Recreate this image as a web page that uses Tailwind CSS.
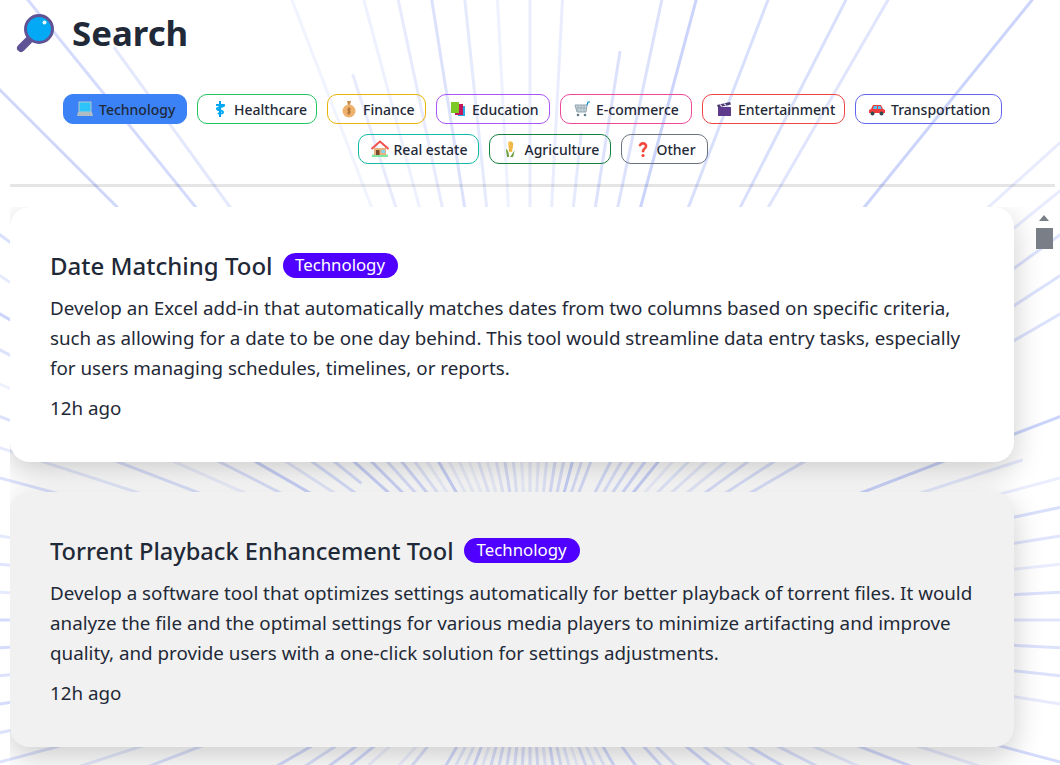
<!DOCTYPE html>
<html lang="en">
<head>
  <meta charset="UTF-8" />
  <title>Search</title>
  <script src="https://cdn.jsdelivr.net/npm/@tailwindcss/browser@4"></script>
</head>
<body class="relative h-[765px] w-[1060px] overflow-hidden bg-white font-['Noto_Sans',sans-serif] text-[#1f2937]">
  <!-- sunburst behind everything -->
  <svg id="rays" class="absolute inset-0" width="1060" height="765" viewBox="0 0 1060 765"></svg>

  <div class="relative flex h-full flex-col">
    <header class="flex h-[94px] items-start pl-[15px] pt-[13px]">
      <svg class="h-[40px] w-[40px]" viewBox="0 0 40 40">
        <path d="M13 28 L6 35" stroke="#5f5395" stroke-width="8" stroke-linecap="round" />
        <circle cx="24" cy="16" r="13.5" fill="#03a9f4" stroke="#5f5395" stroke-width="3" />
        <circle cx="29.5" cy="9.5" r="2" fill="#e8f8ff" />
      </svg>
      <h1 class="mt-[-1px] ml-[17px] text-[34.8px] leading-[42px] font-bold">Search</h1>
    </header>

    <nav class="ml-[10px] flex w-[1045px] flex-wrap justify-center gap-[10px] text-[14px] font-medium">
      <a class="flex h-[30px] w-[124px] items-center gap-[5px] rounded-[10px] border border-[#3b82f6] bg-[#3b82f6] pl-[12px] whitespace-nowrap">
        <svg class="h-[18px] w-[18px]" viewBox="0 0 18 18"><rect x="3" y="2" width="12" height="10" fill="#2cc4fa" stroke="#b8c4cc" /><path d="M2 12h14l1 4H1z" fill="#b0bcc4" /></svg>
        <span>Technology</span>
      </a>
      <a class="flex h-[30px] w-[120px] items-center gap-[5px] rounded-[10px] border border-[#22c55e] pl-[13px] whitespace-nowrap">
        <svg class="h-[18px] w-[18px]" viewBox="0 0 18 18"><path d="M9 1v16" stroke="#039be5" stroke-width="2" /><path d="M5 5h8c1 2-8 2-7 4s6 1 6 3-4 2-5 1" fill="none" stroke="#03a9f4" stroke-width="2" /></svg>
        <span>Healthcare</span>
      </a>
      <a class="flex h-[30px] w-[99px] items-center gap-[5px] rounded-[10px] border border-[#eab308] pl-[12px] whitespace-nowrap">
        <svg class="h-[18px] w-[18px]" viewBox="0 0 18 18"><path d="M7 1h4l-1 4h-2z" fill="#c98d4e" /><ellipse cx="9" cy="11" rx="6.5" ry="6.5" fill="#eeb26e" /><path d="M9 7v8M11 9H8v2h2v2H7" fill="none" stroke="#a86a2c" stroke-width="1" /></svg>
        <span>Finance</span>
      </a>
      <a class="flex h-[30px] w-[114px] items-center gap-[5px] rounded-[10px] border border-[#a855f7] pl-[12px] whitespace-nowrap">
        <svg class="h-[18px] w-[18px]" viewBox="0 0 18 18"><rect x="9" y="6" width="7" height="10" fill="#29a9e6" /><rect x="6" y="4" width="8" height="11" fill="#c2185b" /><rect x="2" y="2" width="8" height="11" fill="#7cc924" /></svg>
        <span>Education</span>
      </a>
      <a class="flex h-[30px] w-[132px] items-center gap-[5px] rounded-[10px] border border-[#ec4899] pl-[12px] whitespace-nowrap">
        <svg class="h-[18px] w-[18px]" viewBox="0 0 18 18"><path d="M2 5h12l-1 7H4z" fill="#cfd8dc" stroke="#90a4ae" /><path d="M5 5v7M8 5v7M11 5v7M3 8h11" stroke="#90a4ae" stroke-width=".8" /><path d="M14 5l1-3h2" fill="none" stroke="#0288d1" stroke-width="1.2" /><circle cx="5" cy="15" r="1.3" fill="#607d8b" /><circle cx="12" cy="15" r="1.3" fill="#607d8b" /></svg>
        <span>E-commerce</span>
      </a>
      <a class="flex h-[30px] w-[143px] items-center gap-[5px] rounded-[10px] border border-[#ef4444] pl-[12px] whitespace-nowrap">
        <svg class="h-[18px] w-[18px]" viewBox="0 0 18 18"><rect x="3" y="7" width="13" height="9" fill="#5e3a8c" /><path d="M2 5l13-3 1 2.5L3 7.500z" fill="#4a3a6b" /><path d="M5 4.500l2 2M9 3.500l2 2" stroke="#d8d0e8" stroke-width="1.2" /></svg>
        <span>Entertainment</span>
      </a>
      <a class="flex h-[30px] w-[147px] items-center gap-[5px] rounded-[10px] border border-[#6366f1] pl-[12px] whitespace-nowrap">
        <svg class="h-[18px] w-[18px]" viewBox="0 0 18 18"><path d="M1 10l2-1 2-4h8l2 4 2 1v3H1z" fill="#ef3b3b" /><path d="M6 6h3v3H5zM10 6h2.500l1 3H10z" fill="#4fc3f7" /><circle cx="4.500" cy="13.500" r="2" fill="#37474f" /><circle cx="13.500" cy="13.500" r="2" fill="#37474f" /></svg>
        <span>Transportation</span>
      </a>
      <a class="flex h-[30px] w-[121px] items-center gap-[5px] rounded-[10px] border border-[#14b8a6] pl-[12px] whitespace-nowrap">
        <svg class="h-[18px] w-[18px]" viewBox="0 0 18 18"><rect x="1" y="14.500" width="16" height="2.500" fill="#81e6a0" /><path d="M3 8h12v7H3z" fill="#e8b27c" /><path d="M0.500 9L9 1.500 17.500 9" fill="none" stroke="#ef5350" stroke-width="2" /><rect x="5" y="10" width="3.500" height="5" fill="#7a4a2a" /><rect x="10.500" y="10" width="3.500" height="3" fill="#81d4fa" /></svg>
        <span>Real estate</span>
      </a>
      <a class="flex h-[30px] w-[122px] items-center gap-[5px] rounded-[10px] border border-[#15803d] pl-[12px] whitespace-nowrap">
        <svg class="h-[18px] w-[18px]" viewBox="0 0 18 18"><path d="M6 2c4-2 6 1 5 5l-1 5H7z" fill="#f6c453" /><path d="M8 4h3M7.500 7h3M7 10h3" stroke="#d89a2b" stroke-width=".8" /><path d="M4 9c2 1 3 4 3 8H5c0-3-1-5-1-8zM13 10c-1 2-1 4-2 7H8c2-2 3-5 5-7z" fill="#689f38" /></svg>
        <span>Agriculture</span>
      </a>
      <a class="flex h-[30px] w-[87px] items-center gap-[5px] rounded-[10px] border border-[#6b7280] pl-[12px] whitespace-nowrap">
        <svg class="h-[18px] w-[18px]" viewBox="0 0 18 18"><path d="M5 6c0-5 8-5 8 0 0 3-3 3-3 6H8c0-4 3-4 3-6 0-2-4-2-4 0z" fill="#f44336" stroke="#f44336" stroke-width=".6" /><circle cx="9" cy="15.500" r="1.600" fill="#f44336" /></svg>
        <span>Other</span>
      </a>
    </nav>

    <div class="mx-[10px] mt-[20px] h-[3px] w-[1045px] shrink-0 bg-black/10"></div>

    <main class="relative mt-[20px] ml-[10px] w-[1045px] flex-1 overflow-hidden">
      <div class="flex w-[1004px] flex-col gap-[30px]">
        <article class="h-[255px] rounded-[20px] bg-white p-[40px] pt-[42px] shadow-[0_10px_30px_rgba(0,0,0,0.2)]">
          <div class="flex h-[34px] items-center gap-[10px] whitespace-nowrap">
            <h2 class="text-[24px] font-medium">Date Matching Tool</h2>
            <span class="mb-[2px] flex h-[25px] w-[115px] items-center justify-center rounded-full bg-[#5000ff] text-[16.8px] text-white">Technology</span>
          </div>
          <p class="mt-[10px] text-[18.8px] leading-[30px] whitespace-nowrap">Develop an Excel add-in that automatically matches dates from two columns based on specific criteria,<br />such as allowing for a date to be one day behind. This tool would streamline data entry tasks, especially<br />for users managing schedules, timelines, or reports.</p>
          <p class="mt-[10px] text-[18.8px] leading-[30px]">12h ago</p>
        </article>
        <article class="h-[255px] rounded-[20px] bg-[#f1f1f1] p-[40px] pt-[42px] shadow-[0_10px_30px_rgba(0,0,0,0.2)]">
          <div class="flex h-[34px] items-center gap-[10px] whitespace-nowrap">
            <h2 class="mt-[1px] text-[23.6px] font-medium">Torrent Playback Enhancement Tool</h2>
            <span class="mb-[2px] flex h-[25px] w-[116px] items-center justify-center rounded-full bg-[#5000ff] text-[16.8px] text-white">Technology</span>
          </div>
          <p class="mt-[10px] text-[18.8px] leading-[30px] whitespace-nowrap">Develop a software tool that optimizes settings automatically for better playback of torrent files. It would<br />analyze the file and the optimal settings for various media players to minimize artifacting and improve<br />quality, and provide users with a one-click solution for settings adjustments.</p>
          <p class="mt-[10px] text-[18.8px] leading-[30px]">12h ago</p>
        </article>
      </div>
      <!-- scrollbar -->
      <div class="absolute top-[8px] left-[1029px] h-0 w-0 border-x-[5px] border-b-[6px] border-x-transparent border-b-[#7a7f87]"></div>
      <div class="absolute top-[21px] left-[1026px] h-[21px] w-[17px] bg-[#7a7f87]"></div>
    </main>
  </div>

  <script>
    // [angle from straight up, opacity, inner radius, outer radius]
    const rays = [
      [0,.12],[3,.12],[6,.15,120,490],[9,.2,120,576],[12,.2],[15,.3],[18,.2,120,430],[21,.22],[27,.22],[30,.18],
      [33,.22,120,430],[36,.25,120,430],[39,.3],[42,.1,120,430],[45,.15,120,430],[48,.14],[51,.14],[54,.2],[57,.2],[60,.2],
      [69,.3],[72,.15,120,518],[75,.12],[78,.22],[81,.18],[84,.12],[87,.2],[90,.18],[93,.2],[96,.2],[99,.14],[105,.25],
      [108,.14],[111,.25],[114,.15],[117,.2],[120,.25],[123,.15],[126,.2],[129,.25],[135,.2],[138,.25],[144,.25],[150,.25],
      [153,.15],[156,.15],[159,.2],[162,.1],[165,.15],[168,.2],[171,.25],[174,.15],[177,.2],[180,.2],[183,.2],[186,.2],
      [189,.2],[192,.2],[195,.2],[198,.12],[201,.25],[204,.15],[207,.15],[210,.25],[219,.2],[222,.1],[228,.1],[231,.25],
      [234,.25],[237,.2],[240,.25],[249,.2],[252,.15],[255,.2],[258,.2],[261,.25],[264,.2],[267,.25],[270,.25],[273,.15],
      [276,.18],[279,.15],[285,.2],[288,.15],[291,.2],[294,.1],[297,.2],[300,.3],[303,.15],[306,.22],[309,.22,217,500],
      [312,.3,120,500],[315,.28],[318,.2,120,430],[321,.25],[324,.16,120,708],[327,.1,120,430],[330,.3,120,430],[333,.1,120,430],
      [336,.1,120,430],[339,.08],[342,.14,120,574],[345,.1],[348,.14],[351,.2],[354,.15],[357,.1]
    ];
    const svg = document.getElementById("rays");
    rays.forEach(([deg, opacity, r0 = 120, r1 = 1000]) => {
      const a = deg * Math.PI / 180;
      const line = document.createElementNS("http://www.w3.org/2000/svg", "line");
      line.setAttribute("x1", 530 + r0 * Math.sin(a));
      line.setAttribute("y1", 620 - r0 * Math.cos(a));
      line.setAttribute("x2", 530 + r1 * Math.sin(a));
      line.setAttribute("y2", 620 - r1 * Math.cos(a));
      line.setAttribute("stroke", "#3f5ff0");
      line.setAttribute("stroke-width", "3");
      line.setAttribute("stroke-opacity", opacity * 0.9);
      svg.appendChild(line);
    });
  </script>
</body>
</html>
